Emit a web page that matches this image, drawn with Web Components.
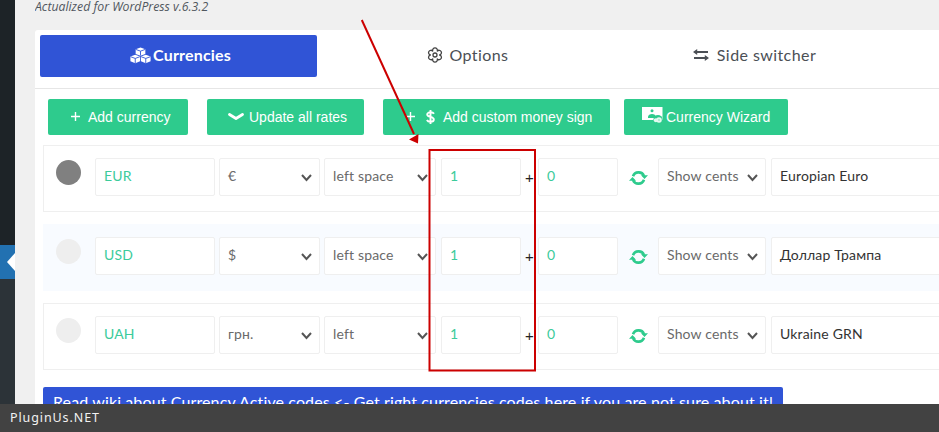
<!DOCTYPE html>
<html lang="en">
<head>
<meta charset="utf-8">
<title>Currencies</title>
<style>
html,body{margin:0;padding:0;height:432px;overflow:hidden;background:#f0f0f0;}
body{font-family:"Lato","Liberation Sans",sans-serif;}
</style>
</head>
<body>
<wp-shell>
  <wp-sidebar slot="side"></wp-sidebar>
  <p-note>Actualized for WordPress v.6.3.2</p-note>
  <p-panel>
    <p-tabs>
      <p-tab active icon="cubes" style="--g:2px">Currencies</p-tab>
      <p-tab icon="gear" style="--g:7px">Options</p-tab>
      <p-tab icon="swap" style="--g:8px">Side switcher</p-tab>
    </p-tabs>
    <p-actions>
      <p-btn icon="plus" style="width:140px;--p:23px;--g:8px">Add currency</p-btn>
      <p-btn icon="chev" style="width:157px;--p:21px;--g:5px">Update all rates</p-btn>
      <p-btn icon="plusdollar" style="width:227px;--p:23px;--g:8px">Add custom money sign</p-btn>
      <p-btn icon="wizard" style="width:164px;--p:18px;--g:3px;margin-left:-5px">Currency Wizard</p-btn>
    </p-actions>
    <p-row dot="#808080" code="EUR" sign="€" pos="left space" name="Europian Euro"></p-row>
    <p-row alt dot="#eeeeee" code="USD" sign="$" pos="left space" name="Доллар Трампа"></p-row>
    <p-row dot="#eeeeee" code="UAH" sign="грн." pos="left" name="Ukraine GRN"></p-row>
    <p-wiki>Read wiki about Currency Active codes &lt;- Get right currencies codes here if you are not sure about it!</p-wiki>
  </p-panel>
  <p-annotation slot="over"></p-annotation>
  <p-credit slot="over">PluginUs.NET</p-credit>
</wp-shell>

<script>
const ICONS = {
  cubes:`<svg width="21" height="17" viewBox="0 0 20 18" preserveAspectRatio="none"><g fill="#fff"><path d="M10 0.5l4.6 1.900v4.900L10 9.200 5.400 7.300V2.400z"/><path d="M5 8.200l4.600 1.900v5L5 17.300.4 15.100v-5z"/><path d="M15 8.200l4.600 1.900v5L15 17.300l-4.600-2.200v-5z"/></g><g fill="none" stroke="#3054d6" stroke-width=".9"><path d="M5.600 2.600L10 4.400l4.400-1.800M10 4.400v4.600M.6 10.300L5 12.100l4.400-1.800M5 12.100v5M10.600 10.300l4.400 1.800 4.400-1.800M15 12.100v5"/></g></svg>`,
  gear:`<svg width="16" height="16" viewBox="0 0 16 16" fill="none" stroke="#444" stroke-width="1.300" stroke-linejoin="round"><path d="M5.700 4.020A2.400 2.400 0 1 1 10.300 4.020A2.400 2.400 0 1 1 12.600 8A2.400 2.400 0 1 1 10.300 11.980A2.400 2.400 0 1 1 5.700 11.980A2.400 2.400 0 1 1 3.400 8A2.400 2.400 0 1 1 5.700 4.020z"/><circle cx="8" cy="8" r="2"/></svg>`,
  swap:`<svg width="16" height="12" viewBox="0 0 16 12" fill="#4b4f55"><path d="M4.200 0v2h10.800v2H4.200v2L0 3z"/><path d="M11.800 6v2H1v2h10.800v2L16 9z"/></svg>`,
  plus:`<svg width="9" height="9" viewBox="0 0 9 9" fill="#fff"><path d="M3.800 0h1.400v3.800H9v1.400H5.200V9H3.800V5.200H0V3.800h3.800z"/></svg>`,
  chev:`<svg width="16" height="9" viewBox="0 0 16 9" fill="none" stroke="#fff" stroke-width="2.800" stroke-linecap="round" stroke-linejoin="round"><path d="M1.500 2.500L8 6.500 14.500 2.500"/></svg>`,
  dollar:`<svg width="9" height="14" viewBox="0 0 9 14" fill="none" stroke="#fff" stroke-width="1.900"><path d="M8 3.800C7.400 2.800 6 2.300 4.500 2.300 2.600 2.300 1.200 3.200 1.200 4.600c0 3 6.600 1.600 6.600 4.800 0 1.400-1.400 2.300-3.300 2.300-1.600 0-3-.6-3.600-1.700M4.500 0v14"/></svg>`,
  wizard:`<svg width="21" height="17" viewBox="0 0 21 17" style="margin-top:-2px"><path fill="#fff" d="M0 0h20.500v13H0z"/><circle cx="10" cy="3.800" r="1.500" fill="#2ecb8d"/><path fill="#2ecb8d" d="M6 10c0-4 8-4 8 0v1H6z"/><circle cx="16" cy="12.500" r="4.500" fill="#2ecb8d"/><circle cx="13.800" cy="13.300" r="2" fill="#e4f9f0"/><circle cx="17" cy="13" r="2.800" fill="#e4f9f0"/><circle cx="17" cy="13" r=".9" fill="#9be8c8"/></svg>`,
  sync:`<svg width="19" height="14" viewBox="0 0 19 14" fill="none"><path d="M4 5.200A5.700 5.700 0 0 1 9.500 1.400 5.700 5.700 0 0 1 15 5M15 8.800A5.700 5.700 0 0 1 9.500 12.600 5.700 5.700 0 0 1 4 9" stroke="#2ecb8d" stroke-width="2.600"/><path d="M12 4.300h7L15.500 8zM0 9.700h7L3.500 6z" fill="#2ecb8d"/></svg>`
};

function def(name, css, html, extend){
  const tpl = document.createElement('template');
  tpl.innerHTML = `<style>${css}</style>${html}`;
  customElements.define(name, class extends HTMLElement{
    constructor(){
      super();
      this.attachShadow({mode:'open'}).appendChild(tpl.content.cloneNode(true));
    }
    connectedCallback(){ if(extend) extend.call(this, this.shadowRoot); }
  });
}

def('wp-shell', `
  :host{display:flex;width:939px;height:432px;position:relative;overflow:hidden;background:#f0f0f0;}
  main{flex:1;min-width:0;padding-left:20px;}
`, `<slot name="side"></slot><main><slot></slot></main><slot name="over"></slot>`);

def('wp-sidebar', `
  :host{display:flex;flex-direction:column;width:15px;flex:none;background:#1d2327;}
  .top{height:245px;background:#1d2327;}
  .cur{height:34px;background:#2271b1;display:flex;align-items:center;justify-content:flex-end;}
  .tri{width:0;height:0;border:9px solid transparent;border-right:8px solid #fff;border-left:0;}
  .rest{flex:1;background:#2c3338;}
`, `<div class="top"></div><div class="cur"><div class="tri"></div></div><div class="rest"></div>`);

def('p-note', `
  :host{display:block;height:30px;overflow:hidden;font:italic 12.250px/13px "Open Sans","Liberation Sans",sans-serif;color:#50575e;}
`, `<slot></slot>`);

def('p-panel', `
  :host{display:block;width:1000px;height:402px;background:#fff;border-radius:3px 0 0 0;box-sizing:border-box;}
`, `<slot></slot>`);

def('p-tabs', `
  :host{display:flex;gap:10px;padding:5px 5px 11px;border-bottom:1.500px solid #e6e6e6;height:42px;}
`, `<slot></slot>`);

def('p-tab', `
  :host{display:flex;align-items:center;justify-content:center;gap:var(--g,5px);width:277px;height:42px;border-radius:2px;font:400 16px/1 "Lato","Liberation Sans",sans-serif;letter-spacing:.42px;color:#4b4f55;padding:0 0 2px 4px;box-sizing:border-box;}
  :host([active]){background:#3054d6;color:#fff;font-weight:700;letter-spacing:.18px;}
  span{display:flex;}
`, `<span id="i"></span><slot></slot>`, function(r){ r.getElementById('i').innerHTML = ICONS[this.getAttribute('icon')]; });

def('p-actions', `
  :host{display:flex;gap:19px;padding:9.500px 0 10px 13px;}
`, `<slot></slot>`);

def('p-btn', `
  :host{display:flex;align-items:center;justify-content:flex-start;gap:var(--g,8px);height:36px;flex:none;padding-left:var(--p,20px);background:#2ecb8d;border-radius:2px;font:400 14px/1 "Liberation Sans",Arial,sans-serif;color:#fff;box-sizing:border-box;white-space:nowrap;}
  span{display:flex;align-items:center;gap:11px;}
`, `<span id="i"></span><slot></slot>`, function(r){
  const k = this.getAttribute('icon');
  r.getElementById('i').innerHTML = k==='plusdollar' ? ICONS.plus + ICONS.dollar : ICONS[k];
});

def('p-field', `
  :host{display:flex;align-items:center;height:38px;box-sizing:border-box;background:#fff;border:1.500px solid #efefef;border-radius:2px;padding:0 8px 1.500px;font:400 14px/1 "Lato","Liberation Sans",sans-serif;letter-spacing:.16px;color:#6a6a6a;flex:none;white-space:nowrap;position:relative;}
  :host([green]){color:#3ccb9b;}
  :host([dark]){color:#333;}
  :host([select]) .c{display:block;}
  .c{display:none;position:absolute;right:7.500px;top:15.500px;}
`, `<slot></slot><svg class="c" width="11" height="8" viewBox="0 0 11 8" fill="none" stroke="#555" stroke-width="2"><path d="M1 1l4.500 5 4.500-5"/></svg>`);

def('p-row', `
  :host{display:flex;align-items:flex-start;box-sizing:border-box;width:1000px;height:67px;margin:0 0 12px 8px;padding:12px 0 0 12px;border:1.500px solid #efefef;background:#fff;}
  :host([alt]){background:#f8fbff;border-color:#f8fbff;}
  .dot{width:25px;height:25px;border-radius:50%;flex:none;margin:2px 14px 0 0;}
  .plus{width:9px;margin:0 4px 0 4px;font:400 15px/38px "Liberation Sans",sans-serif;color:#222;text-align:center;flex:none;padding-top:1px;}
  .sync{display:flex;margin:13px 10px 0 11px;flex:none;}
  p-field{margin-right:4px}
`, `<div class="dot"></div>
  <p-field green style="width:120px"><span id="code"></span></p-field>
  <p-field select style="width:101px"><span id="sign"></span></p-field>
  <p-field select style="width:112px;margin-right:5px"><span id="pos"></span></p-field>
  <p-field green style="width:80px;margin-right:0">1</p-field>
  <div class="plus">+</div>
  <p-field green style="width:80px;margin-right:0">0</p-field>
  <div class="sync">${ICONS.sync}</div>
  <p-field select style="width:108px;margin-right:5px">Show cents</p-field>
  <p-field dark style="width:200px"><span id="name"></span></p-field>`,
  function(r){
    r.querySelector('.dot').style.background = this.getAttribute('dot');
    for(const [id,a] of [['code','code'],['sign','sign'],['pos','pos'],['name','name']]) r.getElementById(id).textContent = this.getAttribute(a);
  });

def('p-wiki', `
  :host{display:block;box-sizing:border-box;width:740px;height:40px;margin:17px 0 0 8px;background:#3054d6;border-radius:2px;color:#fff;padding:4px 0 0 10px;font:400 16px/22px "Lato","Liberation Sans",sans-serif;letter-spacing:.12px;white-space:nowrap;}
`, `<slot></slot>`);

def('p-annotation', `
  :host{display:block;position:absolute;left:0;top:0;width:939px;height:432px;pointer-events:none;}
  svg{display:block}
`, `<svg width="939" height="432" viewBox="0 0 939 432">
    <rect x="429.500" y="150" width="105.500" height="220.500" fill="none" stroke="#cc0000" stroke-width="2"/>
    <path d="M361.800 20L414 134" stroke="#cc0000" stroke-width="2" fill="none"/>
    <path d="M418 143.500L409 139.500L418.500 134z" fill="#cc0000"/>
  </svg>`);

def('p-credit', `
  :host{display:flex;align-items:center;position:absolute;left:0;right:0;bottom:0;height:28px;background:#424242;color:#f2f2f2;padding-left:10px;font:400 12.500px/1 "Noto Sans","Liberation Sans",sans-serif;letter-spacing:.9px;}
`, `<slot></slot>`);
</script>
</body>
</html>
